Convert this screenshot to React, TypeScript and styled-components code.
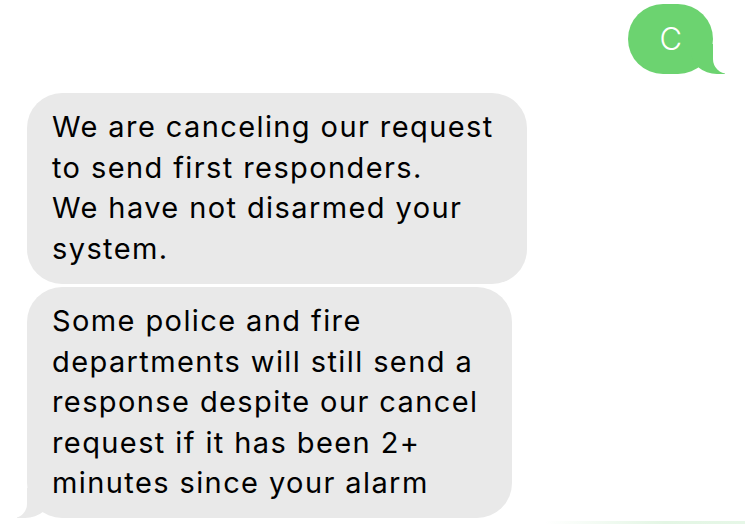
import React from "react";
import styled, { createGlobalStyle, css } from "styled-components";

const Global = createGlobalStyle`
  html, body {
    margin: 0;
    padding: 0;
    background: #ffffff;
  }
  body {
    width: 745px;
    height: 525px;
    overflow: hidden;
    font-family: Inter, "Noto Sans", "Liberation Sans", sans-serif;
    -webkit-font-smoothing: antialiased;
  }
`;

const Thread = styled.div`
  display: flex;
  flex-direction: column;
  padding: 4px 0 0 0;
  width: 745px;
  height: 525px;
  box-sizing: border-box;
  overflow: hidden;
`;

const Row = styled.div<{ $me?: boolean; $gap?: number }>`
  display: flex;
  justify-content: ${(p) => (p.$me ? "flex-end" : "flex-start")};
  padding: ${(p) => (p.$me ? "0 32px 0 0" : "0 0 0 27px")};
  margin-top: ${(p) => p.$gap ?? 0}px;
`;

const Bubble = styled.div<{ $me?: boolean; $tail?: boolean }>`
  position: relative;
  box-sizing: border-box;
  border-radius: 35px;
  font-size: 29px;
  line-height: 40.5px;
  letter-spacing: 1.4px;
  padding: 14.5px 33px 14.5px 25px;
  background: ${(p) => (p.$me ? "#6cd370" : "#e9e9e9")};
  color: ${(p) => (p.$me ? "#ffffff" : "#000000")};
  ${(p) => p.$me && css`
    padding: 14.5px 31px 14.5px 31px;
    letter-spacing: 0;
    font-weight: 300;
    font-size: 31px;
  `}
  ${(p) =>
    p.$tail && p.$me &&
    css`
      &::before {
        content: "";
        position: absolute;
        bottom: 0;
        right: -12px;
        width: 34px;
        height: 30px;
        background: #6cd370;
        border-bottom-left-radius: 26px 22px;
      }
      &::after {
        content: "";
        position: absolute;
        bottom: 0;
        right: -40px;
        width: 40px;
        height: 30px;
        background: #ffffff;
        border-bottom-left-radius: 15px;
      }
    `}
  ${(p) =>
    p.$tail && !p.$me &&
    css`
      &::before {
        content: "";
        position: absolute;
        bottom: 0;
        left: -10px;
        width: 34px;
        height: 30px;
        background: #e9e9e9;
        border-bottom-right-radius: 26px 22px;
      }
      &::after {
        content: "";
        position: absolute;
        bottom: 0;
        left: -40px;
        width: 40px;
        height: 30px;
        background: #ffffff;
        border-bottom-right-radius: 14px;
      }
    `}
`;

const Line = styled.span`
  display: block;
  white-space: nowrap;
  position: relative;
  z-index: 1;
`;

const Fade = styled.div`
  margin-top: 3px;
  margin-left: auto;
  width: 200px;
  height: 3px;
  background: linear-gradient(to right, rgba(220, 244, 222, 0), #e3f6e4 60%, #e6f7e7);
`;

const messages: { me: boolean; lines: string[]; tail: boolean; gap: number }[] = [
  { me: true, lines: ["C"], tail: true, gap: 0 },
  {
    me: false,
    lines: [
      "We are canceling our request",
      "to send first responders.",
      "We have not disarmed your",
      "system.",
    ],
    tail: false,
    gap: 19,
  },
  {
    me: false,
    lines: [
      "Some police and fire",
      "departments will still send a",
      "response despite our cancel",
      "request if it has been 2+",
      "minutes since your alarm",
    ],
    tail: true,
    gap: 3,
  },
];

export default function App() {
  return (
    <>
      <Global />
      <Thread>
        {messages.map((m, i) => (
          <Row key={i} $me={m.me} $gap={m.gap}>
            <Bubble $me={m.me} $tail={m.tail}>
              {m.lines.map((l, j) => (
                <Line key={j}>{l}</Line>
              ))}
            </Bubble>
          </Row>
        ))}
        <Fade />
      </Thread>
    </>
  );
}
